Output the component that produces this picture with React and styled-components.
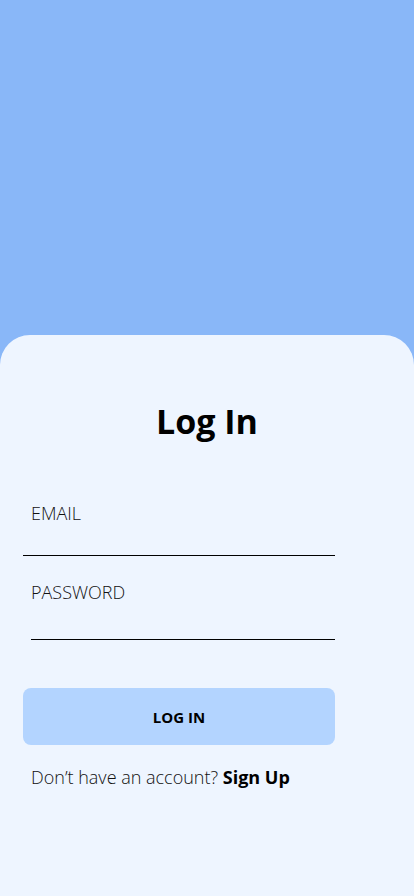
import styled, { createGlobalStyle } from 'styled-components';

const GlobalStyle = createGlobalStyle`
  html, body {
    margin: 0;
    padding: 0;
    background: #89b7f8;
    font-family: "Open Sans", "Liberation Sans", sans-serif;
  }
`;

function App() {
  return (
    <>
      <GlobalStyle />
      <Page>
        <Hero />
        <Card>
          <Title>Log In</Title>
          <Form>
            <Field>
              <Label>EMAIL</Label>
              <Input type="email" $h={31} />
            </Field>
            <Field $indent>
              <Label $flush>PASSWORD</Label>
              <Input type="password" $h={36} />
            </Field>
            <SubmitButton type="button">LOG IN</SubmitButton>
            <Footer>
              Don’t have an account? <SignUp>Sign Up</SignUp>
            </Footer>
          </Form>
        </Card>
      </Page>
    </>
  );
}
export default App;

const Page = styled.div`
  width: 414px;
  height: 896px;
  display: flex;
  flex-direction: column;
  background: #89b7f8;
  overflow: hidden;
`;
const Hero = styled.div`
  height: 335px;
  flex-shrink: 0;
`;
const Card = styled.div`
  flex: 1;
  background: #eef5ff;
  border-radius: 30px 30px 0 0;
  display: flex;
  flex-direction: column;
`;
const Title = styled.h1`
  margin: 63px 0 0;
  text-align: center;
  font-size: 34px;
  font-weight: 700;
  line-height: 46px;
  color: #000;
`;
const Form = styled.form`
  display: flex;
  flex-direction: column;
  padding: 0 79px 0 23px;
  margin-top: 57px;
`;
const Field = styled.label`
  display: flex;
  flex-direction: column;
  margin-left: ${(p) => (p.$indent ? '8px' : '0')};
  margin-bottom: 24px;
`;
const Label = styled.span`
  padding-left: ${(p) => (p.$flush ? '0' : '8px')};
  font-size: 18px;
  font-weight: 300;
  line-height: 24px;
  color: #111;
`;
const Input = styled.input`
  box-sizing: border-box;
  border: none;
  border-bottom: 1px solid #000;
  background: transparent;
  height: ${(p) => p.$h}px;
  padding: 0;
  outline: none;
  font-family: inherit;
  font-size: 16px;
`;
const SubmitButton = styled.button`
  margin-top: 24px;
  height: 57px;
  border: none;
  border-radius: 8px;
  background: #b3d4ff;
  font-family: inherit;
  font-size: 15px;
  font-weight: 700;
  color: #000;
  cursor: pointer;
`;
const Footer = styled.p`
  margin: 20px 0 0 8px;
  font-size: 18px;
  font-weight: 300;
  line-height: 24px;
  color: #111;
`;
const SignUp = styled.span`
  font-weight: 700;
  color: #000;
  cursor: pointer;
`;
